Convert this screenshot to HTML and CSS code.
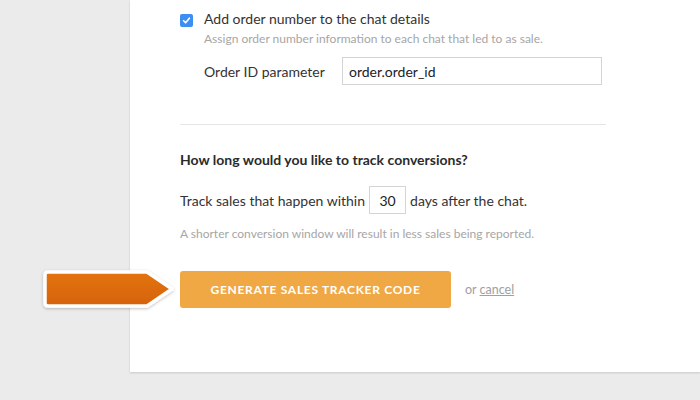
FILE: index.html
```html
<!DOCTYPE html>
<html lang="en">
<head>
  <meta charset="UTF-8">
  <title>Sales Tracker</title>
  <link rel="stylesheet" href="styles.css">
</head>
<body>

<div class="panel">

  <div class="option">
    <span class="check">
      <svg width="13" height="13" viewBox="0 0 13 13"><path d="M3.6 6.8 L5.6 8.8 L9.4 4.2" fill="none" stroke="#fff" stroke-width="1.6" stroke-linecap="round" stroke-linejoin="round"/></svg>
    </span>
    <div class="option-body">
      <div class="option-title">Add order number to the chat details</div>
      <div class="hint">Assign order number information to each chat that led to as sale.</div>
      <div class="field">
        <label>Order ID parameter</label>
        <input type="text" class="text-input" value="order.order_id">
      </div>
    </div>
  </div>

  <div class="divider"></div>

  <h3 class="question">How long would you like to track conversions?</h3>

  <div class="track">
    <span>Track sales that happen within</span>
    <input type="text" class="days" value="30">
    <span>days after the chat.</span>
  </div>

  <div class="hint note">A shorter conversion window will result in less sales being reported.</div>

  <div class="actions">
    <button class="generate">Generate sales tracker code</button>
    <span class="or">or <a href="#">cancel</a></span>
  </div>

</div>

<svg class="pointer" width="142" height="50" viewBox="0 0 142 50">
  <defs>
    <linearGradient id="arrowFill" x1="0" y1="0" x2="0" y2="1">
      <stop offset="0" stop-color="#e3730f"/>
      <stop offset="1" stop-color="#d6620a"/>
    </linearGradient>
    <filter id="arrowShadow" x="-10%" y="-30%" width="120%" height="160%">
      <feDropShadow dx="0" dy="1" stdDeviation="1.5" flood-color="#000" flood-opacity="0.25"/>
    </filter>
  </defs>
  <path d="M8 5 H107 L132 22 L107 39 H8 Q5 39 5 36 V8 Q5 5 8 5 Z" fill="url(#arrowFill)" stroke="#fff" stroke-width="3.5" stroke-linejoin="round" filter="url(#arrowShadow)"/>
</svg>

</body>
</html>
```

FILE: styles.css
```css
body {
  margin: 0;
  background-color: #ebebeb;
  font-family: Lato, "Open Sans", sans-serif;
  color: #333;
  height: 400px;
  overflow: hidden;
}

.panel {
  margin-left: 130px;
  width: 570px;
  height: 372px;
  box-sizing: border-box;
  padding: 9px 94px 0 50px;
  background-color: #fff;
  box-shadow: 0 1px 2px rgba(0, 0, 0, 0.15);
}

.option {
  display: flex;
  gap: 11px;
}

.check {
  width: 13px;
  height: 13px;
  margin-top: 5px;
  border-radius: 2px;
  background-color: #3d8ef2;
  flex-shrink: 0;
}

.check svg {
  display: block;
}

.option-body {
  flex: 1;
}

.option-title {
  font-size: 14px;
  line-height: 20px;
}

.hint {
  font-size: 12px;
  line-height: 16px;
  color: #a6a6a6;
  margin-top: 2px;
}

.field {
  display: flex;
  align-items: center;
  margin-top: 10px;
}

.field label {
  width: 138px;
  font-size: 14px;
}

.text-input {
  width: 260px;
  height: 28px;
  box-sizing: border-box;
  border: 1px solid #d4d4d4;
  padding: 0 6px;
  font-family: inherit;
  font-size: 14px;
  color: #222;
  outline: none;
}

.divider {
  height: 1px;
  background-color: #e6e6e6;
  margin-top: 39px;
}

.question {
  margin: 26px 0 0;
  font-size: 14px;
  line-height: 18px;
  font-weight: bold;
  color: #2b2b2b;
}

.track {
  display: flex;
  align-items: center;
  gap: 4px;
  margin-top: 17px;
  font-size: 14px;
}

.days {
  width: 37px;
  height: 28px;
  box-sizing: border-box;
  border: 1px solid #d4d4d4;
  text-align: center;
  font-family: inherit;
  font-size: 14px;
  color: #222;
  padding: 0;
  outline: none;
}

.note {
  margin-top: 12px;
}

.actions {
  display: flex;
  align-items: center;
  gap: 14px;
  margin-top: 29px;
}

.generate {
  width: 271px;
  height: 37px;
  border: none;
  border-radius: 3px;
  background-color: #f0a845;
  color: #fff;
  font-family: inherit;
  font-size: 12px;
  font-weight: bold;
  letter-spacing: 0.7px;
  text-transform: uppercase;
  cursor: pointer;
}

.or {
  font-size: 12.5px;
  color: #a0a0a0;
}

.or a {
  color: #a0a0a0;
}

.pointer {
  position: absolute;
  left: 40px;
  top: 267px;
}
```
